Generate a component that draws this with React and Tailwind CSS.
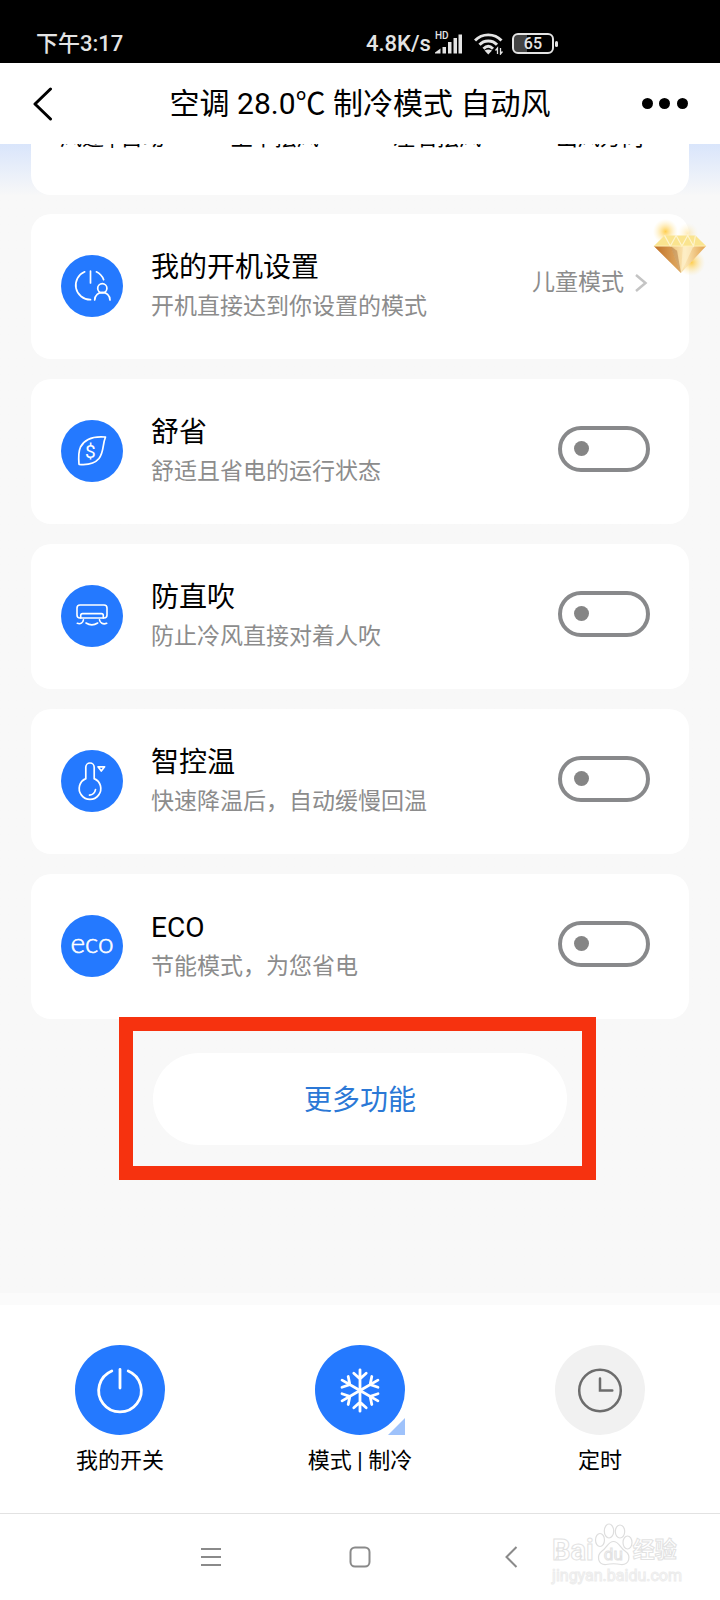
import { useState } from 'react'

const BootIcon = () => (
  <svg viewBox="0 0 62 62" className="w-full h-full" fill="none" stroke="#fff" strokeWidth="1.7" strokeLinecap="round">
    <path d="M23.7 16.8A14.5 14.5 0 0 0 29.5 44.7" />
    <path d="M35.4 16.8A14.5 14.5 0 0 1 42.6 24.6" />
    <path d="M29.5 16V28" />
    <circle cx="41.3" cy="33.3" r="4.6" />
    <path d="M33.7 45C33.9 34.8 48.9 34.8 49 45" />
  </svg>
)

const LeafIcon = () => (
  <svg viewBox="0 0 62 62" className="w-full h-full" fill="none" stroke="#fff" strokeWidth="1.7" strokeLinejoin="round">
    <path d="M44.5 17C33 16 23.5 19 19.5 27C17 32.5 17.5 38 18 44.3C25 45 33 44.4 38 38.5C43 32 41.5 24 44.5 17Z" />
    <text x="29.4" y="38" textAnchor="middle" fontSize="19" fontFamily="Roboto, sans-serif" fill="#fff" stroke="none">$</text>
  </svg>
)

const AirIcon = () => (
  <svg viewBox="0 0 62 62" className="w-full h-full" fill="none" stroke="#fff" strokeWidth="1.6" strokeLinecap="round">
    <rect x="16" y="20" width="30" height="13" rx="3" />
    <path d="M19.7 33V30.5Q19.7 28.6 21.6 28.6H40.4Q42.3 28.6 42.3 30.5V33" />
    <path d="M16.3 38.3C19.5 39.5 22 37.8 22.4 34.8" />
    <path d="M25 38C28.5 40.3 33.2 40.3 36.7 38" />
    <path d="M38.5 34.8C39 37.8 41.9 39.8 45.7 38.3" />
  </svg>
)

const ThermoIcon = () => (
  <svg viewBox="0 0 62 62" className="w-full h-full" fill="none" stroke="#fff" strokeWidth="1.7" strokeLinecap="round">
    <path d="M24.8 28.6V17.2A4.2 4.2 0 0 1 33.2 17.2V28.6A10.8 10.8 0 1 1 24.8 28.6Z" />
    <path d="M28.5 45.2A7 7 0 0 0 34.5 39.6" />
    <path d="M37 16.8H43.6L40.3 21Z" strokeLinejoin="round" />
  </svg>
)

const EcoIcon = () => (
  <svg viewBox="0 0 62 62" className="w-full h-full">
    <text x="31" y="38" textAnchor="middle" fontSize="28" fontFamily="Lato, sans-serif" fontWeight="300" fill="#fff" stroke="#fff" strokeWidth="0.6">eco</text>
  </svg>
)

const Diamond = () => (
  <svg viewBox="0 0 60 60" className="w-full h-full">
    <defs>
      <radialGradient id="glow">
        <stop offset="0" stopColor="#ffc93c" stopOpacity="0.9" />
        <stop offset="1" stopColor="#ffe9a8" stopOpacity="0" />
      </radialGradient>
      <linearGradient id="gem" x1="0" y1="0" x2="1" y2="0">
        <stop offset="0" stopColor="#b9651f" />
        <stop offset="0.4" stopColor="#f3cf8d" />
        <stop offset="0.6" stopColor="#fbe6b4" />
        <stop offset="1" stopColor="#e2a04a" />
      </linearGradient>
    </defs>
    <circle cx="15" cy="14" r="13" fill="url(#glow)" />
    <circle cx="42" cy="46" r="14" fill="url(#glow)" />
    <circle cx="38" cy="16" r="11" fill="url(#glow)" opacity="0.4" />
    <path d="M14 18H46L57 29H3Z" fill="#fae48f" />
    <path d="M3 29H57L31 57Z" fill="url(#gem)" />
    <path d="M14 18L20 29L26 18L32 29L38 18L44 29L46 18" fill="none" stroke="#fff8dc" strokeWidth="1.2" opacity="0.8" />
    <path d="M3 29L20 29L31 57Z" fill="#c4782b" opacity="0.55" />
    <path d="M20 29L31 57L27 34Z" fill="#8f4c1c" opacity="0.35" />
    <path d="M33 29L31 57L44 29Z" fill="#fff3d0" opacity="0.6" />
    <path d="M3 29H57" stroke="#fff0b8" strokeWidth="1" />
  </svg>
)

const PowerIcon = () => (
  <svg viewBox="0 0 90 90" className="w-full h-full" fill="none" stroke="#fff" strokeWidth="2.8" strokeLinecap="round">
    <path d="M36.8 26A21.3 21.3 0 1 0 53.2 26" />
    <path d="M45 24.5V43" />
  </svg>
)

const SnowIcon = () => (
  <svg viewBox="0 0 90 90" className="w-full h-full" fill="none" stroke="#fff" strokeWidth="2.8" strokeLinecap="round">
    {[0, 60, 120, 180, 240, 300].map((angle) => (
      <path key={angle} d="M45 45.5V24.8M38.8 28.3L45 33.8L51.2 28.3" transform={`rotate(${angle} 45 45.5)`} />
    ))}
  </svg>
)

const ClockIcon = () => (
  <svg viewBox="0 0 90 90" className="w-full h-full" fill="none" stroke="#6c6c6c" strokeWidth="2.5" strokeLinecap="round">
    <circle cx="45" cy="45.5" r="20.8" />
    <path d="M45 33.5V45.5H57.3" />
  </svg>
)

const winds = ['风速 | 自动', '上下摆风', '左右摆风', '出风方向']

const features = [
  { id: 'comfort', title: '舒省', desc: '舒适且省电的运行状态', Icon: LeafIcon },
  { id: 'wind', title: '防直吹', desc: '防止冷风直接对着人吹', Icon: AirIcon },
  { id: 'temp', title: '智控温', desc: '快速降温后，自动缓慢回温', Icon: ThermoIcon },
  { id: 'eco', title: 'ECO', desc: '节能模式，为您省电', Icon: EcoIcon },
]

const actions = [
  { id: 'power', label: '我的开关', Icon: PowerIcon, active: true },
  { id: 'mode', label: '模式 | 制冷', Icon: SnowIcon, active: true, corner: true },
  { id: 'timer', label: '定时', Icon: ClockIcon, active: false },
]

const StatusBar = () => (
  <div className="flex items-center h-[63px] pl-9 pt-6 bg-black text-[#e4e4e4] text-[22px] leading-10 font-medium">
    <span className="w-[330px]">下午3:17</span>
    <span>4.8K/s</span>
    <div className="relative ml-1">
      <svg viewBox="0 0 27 20" className="w-[27px] h-5" fill="currentColor">
        <path d="M0 19.5V18.5L5.500 14.500V19.500ZM7.500 13H11V19.500H7.500ZM13 8H16.500V19.500H13ZM18.500 4H22V19.500H18.500ZM23.500 0.500H27V19.500H23.500Z" />
      </svg>
      <span className="absolute left-0 -top-1 text-[10px] leading-3">HD</span>
    </div>
    <svg viewBox="0 0 30 22" className="w-[30px] h-[22px] ml-3" fill="none" stroke="currentColor" strokeWidth="2.900">
      <path d="M1 7.500C8 0 20.500 0 27.500 7.500M5.500 11.800C10 6.700 18.500 6.700 23 11.800M9.500 15.700C12.500 12.700 16 12.700 19 15.700" />
      <path d="M10.500 17.500L14.300 21.500L18 17.500C15.500 16 13 16 10.500 17.500Z" fill="currentColor" stroke="none" />
      <path d="M23.500 21V15L21.500 17.500M26.500 15V21L28.500 18.500" strokeWidth="1.300" />
    </svg>
    <div className="flex items-center ml-2">
      <div className="w-[42px] h-[21px] rounded-md border-2 border-current bg-linear-to-r from-[#444] from-35% to-black to-35% text-center text-[16px] leading-[17px]">65</div>
      <div className="w-[3px] h-1.5 ml-px rounded-sm bg-current" />
    </div>
  </div>
)

const Row = ({ Icon, title, desc, htmlFor, children }) => (
  <section className="relative flex items-center h-[145px] pl-[30px] pr-[39px] rounded-[20px] bg-white">
    <div className="size-[62px] mb-px shrink-0 rounded-full bg-[#2479ff]">
      <Icon />
    </div>
    <label htmlFor={htmlFor} className="flex-1 min-w-0 ml-7">
      <span className="block text-[28px] leading-10 text-black">{title}</span>
      <span className="block text-[23px] leading-[38px] text-[#8c8c8c]">{desc}</span>
    </label>
    {children}
  </section>
)

const Watermark = () => (
  <div className="absolute right-[38px] top-2 text-white [-webkit-text-stroke:1px_#e2e2e2]">
    <div className="flex items-end h-11">
      <span className="text-[29px] leading-8 font-bold">Bai</span>
      <div className="relative w-[39px] h-[43px]">
        <svg viewBox="0 0 39 43" className="w-full h-full" fill="#fff" stroke="#dedede" strokeWidth="1.2">
          <ellipse cx="6" cy="17" rx="4.500" ry="6.500" />
          <ellipse cx="15" cy="8" rx="4.700" ry="7" />
          <ellipse cx="26" cy="8.500" rx="4.700" ry="6.500" />
          <ellipse cx="33.500" cy="19.500" rx="4.500" ry="6.500" />
          <path d="M19.500 18.500C14 18.500 13 25 8 28C2 33 4 42 12 41.500C17 40.500 22 40.500 27 41.500C35 42 38 33 31 28C26 25 25 18.500 19.500 18.500Z" />
        </svg>
        <span className="absolute inset-x-0 bottom-0 text-center text-[17px] leading-6">du</span>
      </div>
      <span className="text-[22px] leading-8 font-bold">经验</span>
    </div>
    <div className="text-[16px] leading-5 [-webkit-text-stroke:1px_#ececec]">jingyan.baidu.com</div>
  </div>
)

const App = () => {
  const [enabled, setEnabled] = useState({})

  const toggle = (id) => setEnabled((prev) => ({ ...prev, [id]: !prev[id] }))

  return (
    <div className="flex flex-col min-h-screen bg-[#f8f8f8] text-black font-['Roboto','Noto_Sans_CJK_SC',sans-serif]">
      <StatusBar />

      <header className="flex items-center justify-between h-[81px] px-8 bg-white">
        <button type="button" aria-label="返回" className="w-[46px]">
          <svg viewBox="0 0 22 34" className="w-[22px] h-[34px]" fill="none" stroke="#000" strokeWidth="3" strokeLinecap="round" strokeLinejoin="round">
            <path d="M18.500 2L3 17L18.500 32" />
          </svg>
        </button>
        <h1 className="text-[30px] leading-10">空调 28.0℃ 制冷模式 自动风</h1>
        <button type="button" aria-label="更多" className="flex justify-between w-[46px]">
          <span className="size-[11px] rounded-full bg-black" />
          <span className="size-[11px] rounded-full bg-black" />
          <span className="size-[11px] rounded-full bg-black" />
        </button>
      </header>

      <main className="flex-1 px-[31px] overflow-hidden bg-linear-to-b from-[#d9e5fb] to-[#f8f8f8] to-[52px]">
        {/* Wind settings, scrolled under the header */}
        <div className="-mt-[22px] grid grid-cols-4 h-[73px] pr-2 rounded-b-[20px] bg-white text-center text-[22px] leading-8">
          {winds.map((name) => (
            <span key={name}>{name}</span>
          ))}
        </div>

        <div className="flex flex-col gap-5 mt-[19px]">
          <Row Icon={BootIcon} title="我的开机设置" desc="开机直接达到你设置的模式" htmlFor="boot">
            <button type="button" id="boot" className="flex items-center gap-2.5 mb-2 text-[23px] leading-8 text-[#8c8c8c]">
              儿童模式
              <svg viewBox="0 0 16 20" className="w-4 h-5" fill="none" stroke="#c4c4c4" strokeWidth="2.500">
                <path d="M2 2L11.500 10L2 18" />
              </svg>
            </button>
            <div className="absolute -right-5 top-1 size-[58px]">
              <Diamond />
            </div>
          </Row>

          {features.map(({ id, title, desc, Icon }) => (
            <Row key={id} Icon={Icon} title={title} desc={desc} htmlFor={id}>
              <input
                id={id}
                type="checkbox"
                role="switch"
                checked={!!enabled[id]}
                onChange={() => toggle(id)}
                className="appearance-none flex items-center w-[92px] h-[46px] mb-1.5 px-3 rounded-full border-4 border-[#88898b] before:content-[''] before:size-[15px] before:rounded-full before:bg-[#858585] checked:justify-end checked:border-[#2479ff] checked:before:bg-[#2479ff]"
              />
            </Row>
          ))}
        </div>

        <div className="relative max-w-[414px] mx-auto mt-[34px] mb-10">
          <button type="button" className="w-full h-[92px] pt-1 rounded-full bg-white text-[28px] text-[#2b78d6]">
            更多功能
          </button>
          {/* Highlight frame */}
          <div className="absolute -left-[34px] -right-[29px] -top-9 -bottom-[35px] border-[14px] border-[#f6320f] pointer-events-none" />
        </div>
      </main>

      <div className="h-3 bg-[#fbfbfb]" />
      <footer className="grid grid-cols-3 pt-10 pb-9 bg-white">
        {actions.map(({ id, label, Icon, active, corner }) => (
          <button key={id} type="button" className="flex flex-col items-center gap-2.5">
            <span className={`relative size-[90px] rounded-full ${active ? 'bg-[#2479ff]' : 'bg-[#f1f1f1]'}`}>
              <Icon />
              {corner && (
                <span className="absolute right-0 bottom-0 size-[17px] bg-[#9ec2fb] [clip-path:polygon(100%_0,100%_100%,0_100%)]" />
              )}
            </span>
            <span className="text-[22px] leading-8">{label}</span>
          </button>
        ))}
      </footer>

      <nav className="relative flex justify-center h-[87px] border-t border-[#e2e2e2] bg-white">
        <button type="button" aria-label="菜单" className="flex items-center justify-center w-[150px]">
          <svg viewBox="0 0 22 22" className="size-[22px]" stroke="#8a8a8a" strokeWidth="2">
            <path d="M2 3H22M2 11H22M2 19H22" />
          </svg>
        </button>
        <button type="button" aria-label="主页" className="flex items-center justify-center w-[150px]">
          <svg viewBox="0 0 22 22" className="size-[22px]" fill="none" stroke="#8a8a8a" strokeWidth="2">
            <rect x="1.500" y="1.500" width="19" height="19" rx="4.500" />
          </svg>
        </button>
        <button type="button" aria-label="后退" className="flex items-center justify-center w-[150px]">
          <svg viewBox="0 0 22 22" className="size-[22px]" fill="none" stroke="#8a8a8a" strokeWidth="2">
            <path d="M17.500 1L7.500 11L17.500 21" />
          </svg>
        </button>
        <Watermark />
      </nav>
    </div>
  )
}

export default App
